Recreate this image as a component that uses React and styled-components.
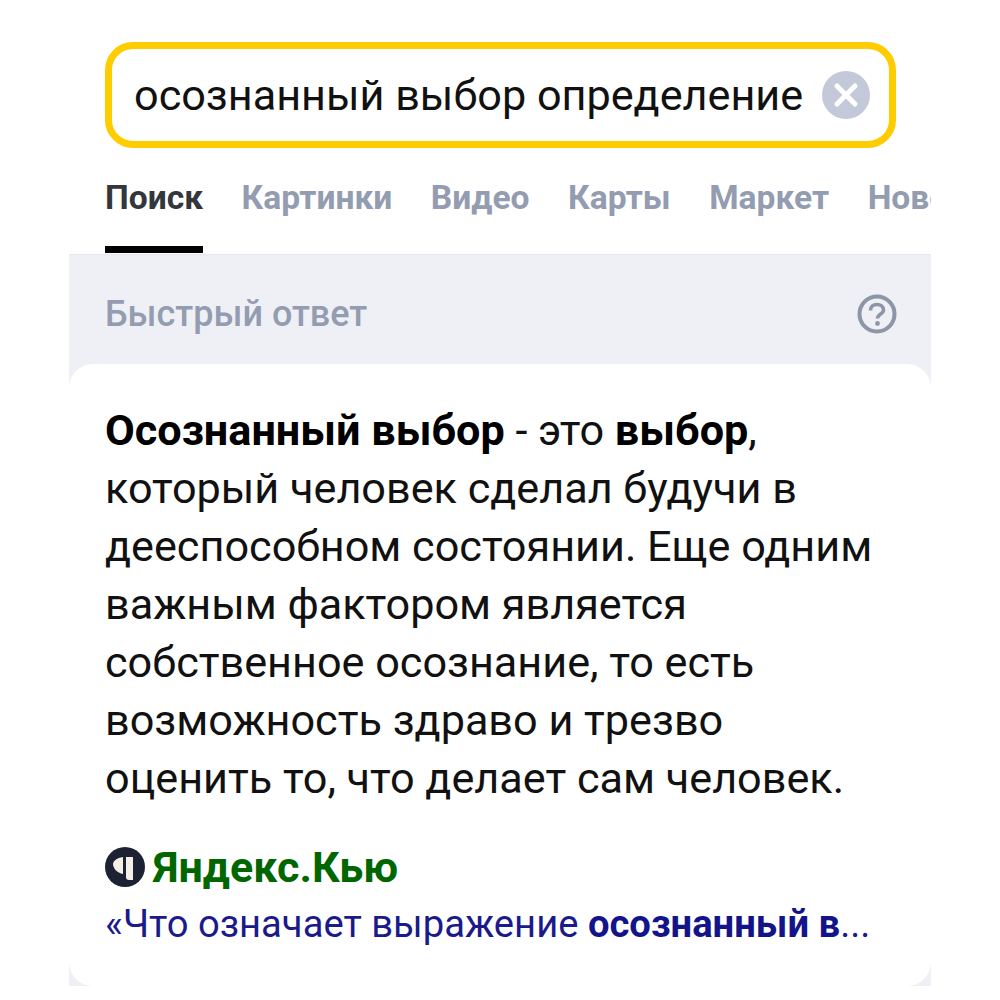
import React from 'react';
import styled, {createGlobalStyle} from 'styled-components';

const GlobalStyle = createGlobalStyle`
  html, body {
    margin: 0;
    background: #fff;
  }
  body {
    font-family: Roboto, "Liberation Sans", sans-serif;
  }
`;

const Page = styled.div`
  width: 862px;
  height: 1000px;
  margin-left: 69px;
  padding-top: 42px;
  box-sizing: border-box;
  overflow: hidden;
`;

const SearchBox = styled.div`
  width: 791px;
  height: 106px;
  margin-left: 36px;
  box-sizing: border-box;
  border: 7px solid #fc0;
  border-radius: 28px;
  padding: 0 19px 0 22px;
  display: flex;
  align-items: center;
  justify-content: space-between;
`;

const SearchText = styled.div`
  font-size: 43.2px;
  color: #111;
  white-space: nowrap;
`;

const ClearButton = styled.div`
  width: 48px;
  height: 48px;
  border-radius: 50%;
  background: #c4c9d9;
  display: flex;
  align-items: center;
  justify-content: center;
`;

const Tabs = styled.div`
  height: 106px;
  padding-left: 36px;
  display: flex;
  gap: 38.5px;
  overflow: hidden;
  white-space: nowrap;
`;

const Tab = styled.div`
  height: 105px;
  box-sizing: border-box;
  padding-top: 30px;
  font-size: 33.6px;
  font-weight: 700;
  color: ${props => props.$active ? '#33363a' : '#939cb0'};
  border-bottom: 7px solid ${props => props.$active ? '#000' : 'transparent'};
`;

const Panel = styled.div`
  background: #eef0f5;
  border-top: 1px solid #e6e8ee;
  box-sizing: border-box;
  height: 732px;
  display: flex;
  flex-direction: column;
`;

const PanelHead = styled.div`
  height: 109px;
  flex: none;
  padding: 9px 34px 0 36px;
  box-sizing: border-box;
  display: flex;
  align-items: center;
  justify-content: space-between;
`;

const PanelTitle = styled.div`
  font-size: 36px;
  font-weight: 500;
  color: #939cb0;
`;

const Card = styled.div`
  height: 622px;
  box-sizing: border-box;
  background: #fff;
  border-radius: 24px;
  padding: 38px 36px 0;
`;

const Answer = styled.div`
  font-size: 43.2px;
  line-height: 58px;
  color: #111;
  white-space: nowrap;
  b {
    font-weight: 700;
    color: #000;
  }
`;

const Source = styled.div`
  margin-top: 30px;
  display: flex;
  align-items: center;
  gap: 8px;
  height: 58px;
`;

const SourceName = styled.div`
  font-size: 43px;
  font-weight: 700;
  color: #060;
`;

const Snippet = styled.div`
  font-size: 38.2px;
  line-height: 56px;
  color: #1a1a8c;
  white-space: nowrap;
  b {
    font-weight: 700;
    color: #14148a;
  }
`;

function ClearIcon() {
  return (
    <svg width="26" height="26" viewBox="0 0 26 26">
      <path d="M4 4 L22 22 M22 4 L4 22" stroke="#fff" strokeWidth="5" strokeLinecap="round"/>
    </svg>
  );
}

function HelpIcon() {
  return (
    <svg width="40" height="40" viewBox="0 0 40 40" fill="none">
      <circle cx="20" cy="20" r="17.5" stroke="#8d96a8" strokeWidth="4"/>
      <path d="M13.5 16.5 C13.5 12.5 16.5 10.5 20 10.5 C23.5 10.5 26.5 12.5 26.5 16 C26.5 20 20.5 20 20.5 24.5" stroke="#8d96a8" strokeWidth="3.6"/>
      <circle cx="20.5" cy="29.5" r="2.4" fill="#8d96a8"/>
    </svg>
  );
}

function KyuLogo() {
  return (
    <svg width="40" height="40" viewBox="0 0 40 40">
      <circle cx="20" cy="20" r="20" fill="#1c2233"/>
      <path d="M18 10 C12 11 8 14 8 17 C8 21 12 26 18 27 Z" fill="#f5efe6"/>
      <path d="M21 10 L28 10 L28 33 L24 33 C22 33 21 32 21 30 Z" fill="#f5efe6"/>
    </svg>
  );
}

export default function App() {
  const tabs = ['Картинки', 'Видео', 'Карты', 'Маркет', 'Новости'];

  return (
    <Page>
      <GlobalStyle/>
      <SearchBox>
        <SearchText>осознанный выбор определение</SearchText>
        <ClearButton><ClearIcon/></ClearButton>
      </SearchBox>
      <Tabs>
        <Tab $active>Поиск</Tab>
        {tabs.map(item => <Tab key={item}>{item}</Tab>)}
      </Tabs>
      <Panel>
        <PanelHead>
          <PanelTitle>Быстрый ответ</PanelTitle>
          <HelpIcon/>
        </PanelHead>
        <Card>
          <Answer>
            <b>Осознанный выбор</b> - это <b>выбор</b>,<br/>
            который человек сделал будучи в<br/>
            дееспособном состоянии. Еще одним<br/>
            важным фактором является<br/>
            собственное осознание, то есть<br/>
            возможность здраво и трезво<br/>
            оценить то, что делает сам человек.
          </Answer>
          <Source>
            <KyuLogo/>
            <SourceName>Яндекс.Кью</SourceName>
          </Source>
          <Snippet>«Что означает выражение <b>осознанный в</b>...</Snippet>
        </Card>
      </Panel>
    </Page>
  );
}
